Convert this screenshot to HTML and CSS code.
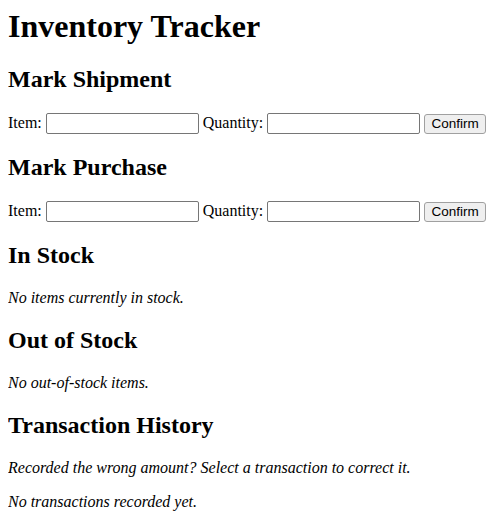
FILE: index.html
```html
<!DOCTYPE html>
<html>
<head>
<meta charset="utf-8">
<title>Inventory Tracker</title>
<link rel="stylesheet" href="styles.css">
</head>
<body>
<h1 class="title">Inventory Tracker</h1>
<h2>Mark Shipment</h2>
<form class="row">
<label>Item: <input type="text" class="field"></label>
<label>Quantity: <input type="text" class="field"></label>
<button type="button" class="btn">Confirm</button>
</form>
<h2>Mark Purchase</h2>
<form class="row">
<label>Item: <input type="text" class="field"></label>
<label>Quantity: <input type="text" class="field"></label>
<button type="button" class="btn">Confirm</button>
</form>
<h2>In Stock</h2>
<p class="note">No items currently in stock.</p>
<h2>Out of Stock</h2>
<p class="note">No out-of-stock items.</p>
<h2>Transaction History</h2>
<p class="note">Recorded the wrong amount? Select a transaction to correct it.</p>
<p class="note">No transactions recorded yet.</p>
</body>
</html>
```
FILE: styles.css
```css
body {
  font-family: "Liberation Serif", serif;
  font-size: 16px;
  margin: 8px;
  color: #000;
  background: #fff;
}
.title {
  margin-top: 0;
}
.field {
  box-sizing: border-box;
  width: 153px;
  height: 21px;
  border: 1px solid #767676;
  border-radius: 2px;
  padding: 1px 2px;
  font-size: 13px;
}
.btn {
  box-sizing: border-box;
  width: 62px;
  height: 20px;
  font-family: "Liberation Sans", sans-serif;
  font-size: 13.5px;
  line-height: 16px;
  padding: 0 4px;
  border: 1px solid #a0a0a0;
  border-radius: 3px;
  background: #efefef;
  color: #000;
}
.note {
  font-style: italic;
}
```
